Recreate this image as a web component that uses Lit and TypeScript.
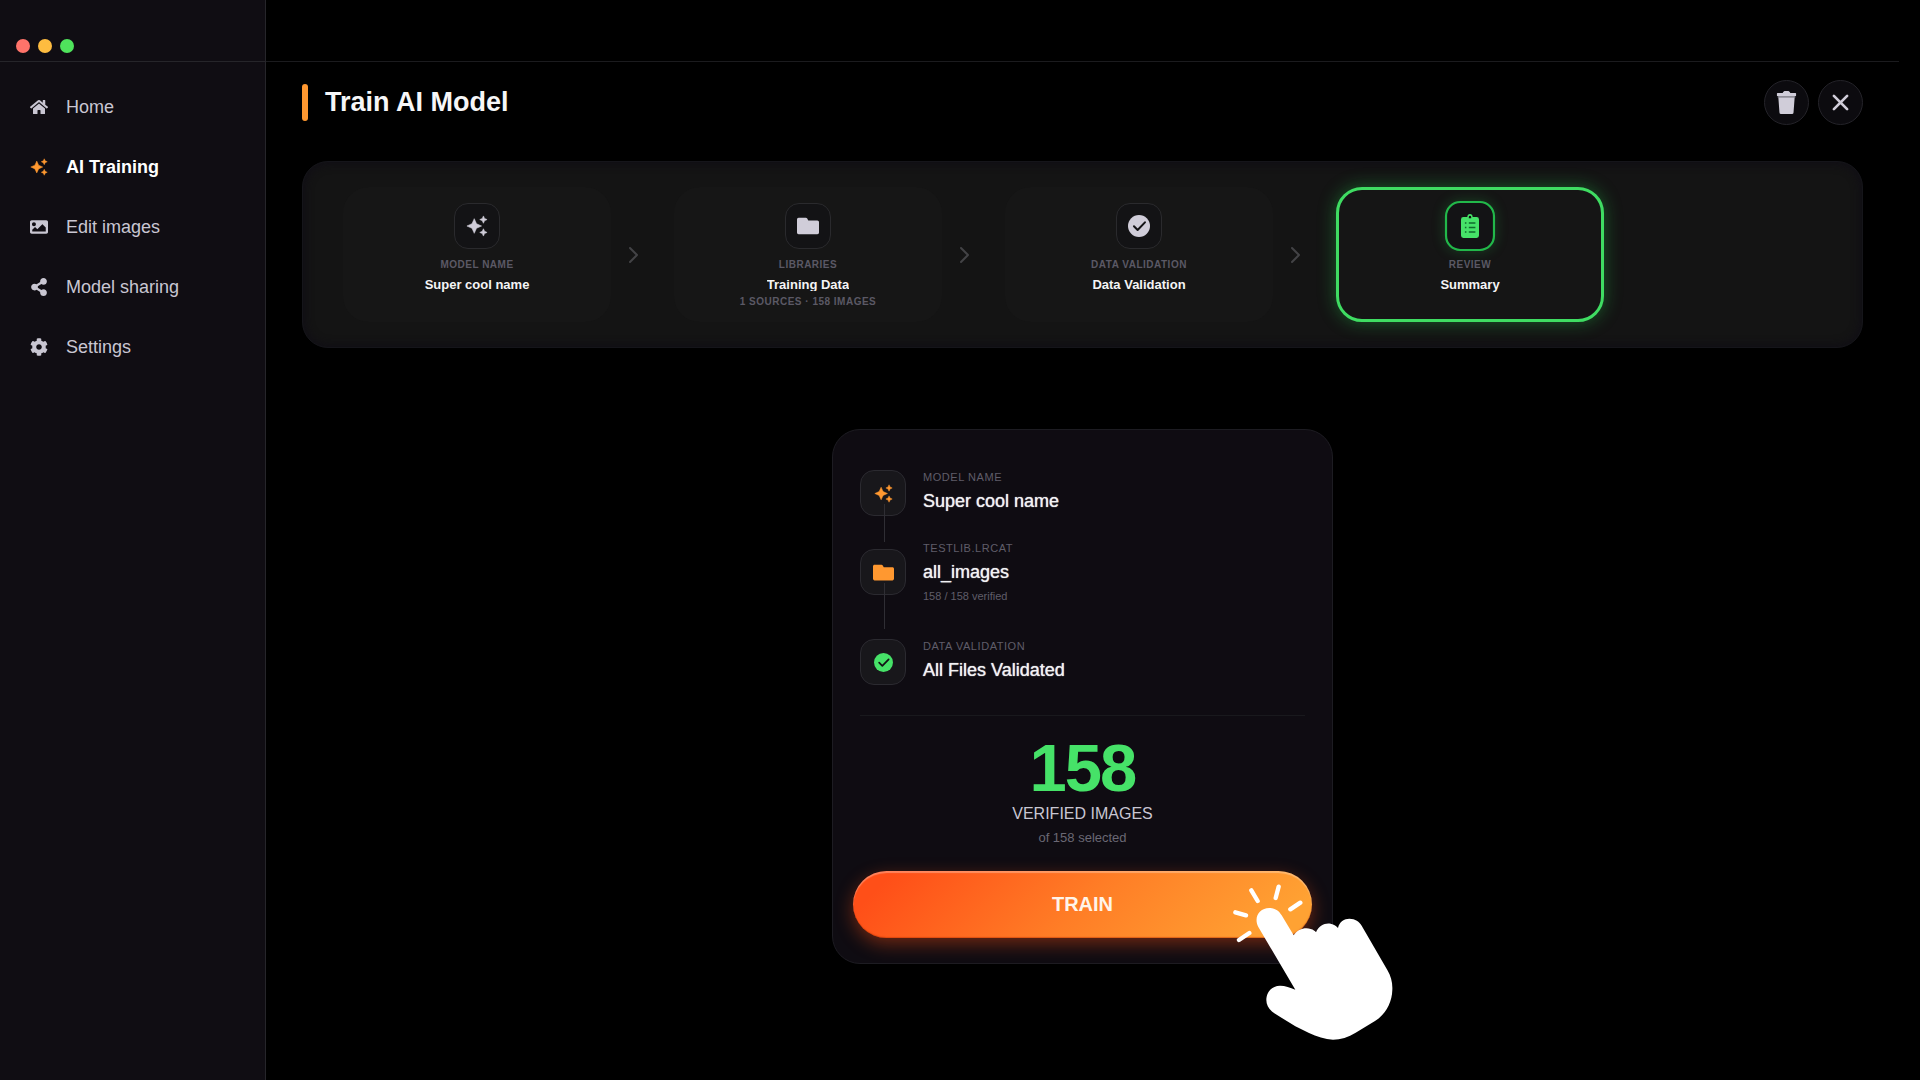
import { LitElement, html, css, svg } from "lit";
import { customElement, property } from "lit/decorators.js";
import { classMap } from "lit/directives/class-map.js";

interface Glyph {
  box: string;
  art: unknown;
}

const ICONS: Record<string, Glyph> = {
  home: {
    box: "0 0 576 512",
    art: svg`<path d="M280.37 148.26L96 300.11V464a16 16 0 0 0 16 16l112.06-.29a16 16 0 0 0 15.92-16V368a16 16 0 0 1 16-16h64a16 16 0 0 1 16 16v95.64a16 16 0 0 0 16 16.05L464 480a16 16 0 0 0 16-16V300L295.67 148.26a12.19 12.19 0 0 0-15.3 0zM571.6 251.47L488 182.56V44.05a12 12 0 0 0-12-12h-56a12 12 0 0 0-12 12v72.61L318.47 43a48 48 0 0 0-61 0L4.34 251.47a12 12 0 0 0-1.6 16.9l25.5 31A12 12 0 0 0 45.15 301l235.22-193.74a12.19 12.19 0 0 1 15.3 0L530.9 301a12 12 0 0 0 16.9-1.6l25.5-31a12 12 0 0 0-1.7-16.93z"/>`,
  },
  sparkles: {
    box: "0 0 24 24",
    art: svg`<path stroke="currentColor" stroke-width=".6" stroke-linejoin="round" d="m19 9 1.25-2.75L23 5l-2.75-1.25L19 1l-1.25 2.75L15 5l2.75 1.25L19 9zm-7.5.5L9 4 6.5 9.5 1 12l5.5 2.5L9 20l2.5-5.5L17 12l-5.5-2.5zM19 15l-1.25 2.75L15 19l2.75 1.25L19 23l1.25-2.75L23 19l-2.75-1.25L19 15z"/>`,
  },
  image: {
    box: "0 0 512 512",
    art: svg`<path d="M464 448H48c-26.51 0-48-21.49-48-48V112c0-26.51 21.49-48 48-48h416c26.51 0 48 21.49 48 48v288c0 26.51-21.49 48-48 48zM112 120c-30.928 0-56 25.072-56 56s25.072 56 56 56 56-25.072 56-56-25.072-56-56-56zM64 384h384V272l-87.515-87.515c-4.686-4.686-12.284-4.686-16.971 0L208 320l-55.515-55.515c-4.686-4.686-12.284-4.686-16.971 0L64 336v48z" fill-rule="evenodd"/>`,
  },
  share: {
    box: "0 0 448 512",
    art: svg`<path d="M352 320c-22.608 0-43.387 7.819-59.79 20.895l-102.486-64.054a96.551 96.551 0 0 0 0-41.683l102.486-64.054C308.613 184.181 329.392 192 352 192c53.019 0 96-42.981 96-96S405.019 0 352 0s-96 42.981-96 96c0 7.158.79 14.13 2.276 20.841L155.79 180.895C139.387 167.819 118.608 160 96 160c-53.019 0-96 42.981-96 96s42.981 96 96 96c22.608 0 43.387-7.819 59.79-20.895l102.486 64.054A96.301 96.301 0 0 0 256 416c0 53.019 42.981 96 96 96s96-42.981 96-96-42.981-96-96-96z"/>`,
  },
  settings: {
    box: "0 0 512 512",
    art: svg`<path d="M487.4 315.7l-42.6-24.6c4.3-23.2 4.3-47 0-70.2l42.6-24.6c4.9-2.8 7.1-8.6 5.5-14-11.1-35.6-30-67.8-54.7-94.6-3.8-4.1-10-5.1-14.8-2.3L380.8 110c-17.9-15.4-38.5-27.3-60.8-35.1V25.8c0-5.6-3.9-10.5-9.4-11.7-36.7-8.2-74.3-7.8-109.2 0-5.5 1.2-9.4 6.1-9.4 11.7V75c-22.2 7.9-42.8 19.8-60.8 35.1L88.7 85.5c-4.9-2.8-11-1.9-14.8 2.3-24.7 26.7-43.6 58.9-54.7 94.6-1.7 5.4.6 11.2 5.5 14L67.3 221c-4.3 23.2-4.3 47 0 70.2l-42.6 24.6c-4.9 2.8-7.1 8.6-5.5 14 11.1 35.6 30 67.8 54.7 94.6 3.8 4.1 10 5.1 14.8 2.3l42.6-24.6c17.9 15.4 38.5 27.3 60.8 35.1v49.2c0 5.6 3.9 10.5 9.4 11.7 36.7 8.2 74.3 7.8 109.2 0 5.5-1.2 9.4-6.1 9.4-11.7v-49.2c22.2-7.9 42.8-19.8 60.8-35.1l42.6 24.6c4.9 2.8 11 1.9 14.8-2.3 24.7-26.7 43.6-58.9 54.7-94.6 1.5-5.5-.7-11.3-5.6-14.1zM256 336c-44.1 0-80-35.9-80-80s35.9-80 80-80 80 35.9 80 80-35.9 80-80 80z"/>`,
  },
  folder: {
    box: "0 0 512 512",
    art: svg`<path d="M474 128H262l-24-44c-7-13-18-20-32-20H38C17 64 0 81 0 102v308c0 21 17 38 38 38h436c21 0 38-17 38-38V166c0-21-17-38-38-38z"/>`,
  },
  check: {
    box: "0 0 24 24",
    art: svg`<circle cx="12" cy="12" r="12"/><path d="M6.5 12.3 10.5 16.3 18.5 8" fill="none" stroke="#131316" stroke-width="2.2" stroke-linecap="round" stroke-linejoin="round"/>`,
  },
  clipboard: {
    box: "0 0 80 80",
    art: svg`<path fill-rule="evenodd" d="M18 10h13c0-6 4-10 9-10s9 4 9 10h13a8 8 0 0 1 8 8v54a8 8 0 0 1-8 8H18a8 8 0 0 1-8-8V18a8 8 0 0 1 8-8zM40 6a4 4 0 0 0-4 4v4h8v-4a4 4 0 0 0-4-4z"/><path d="M23 30h5M36 30h22M23 45h5M36 45h22M23 60h5M36 60h22" stroke="#0f6a2c" stroke-width="5" fill="none"/>`,
  },
  trash: {
    box: "0 0 72 72",
    art: svg`<path d="M10 14h52l-4 53a5 5 0 0 1-5 5H19a5 5 0 0 1-5-5z"/><path d="M8 14h56v7H8z" opacity=".75" fill="#77757f"/><path d="M8 6h16c2-4 5-6 8-6h8c3 0 6 2 8 6h16a2 2 0 0 1 2 2v6a2 2 0 0 1-2 2H8a2 2 0 0 1-2-2V8a2 2 0 0 1 2-2z"/>`,
  },
  close: {
    box: "0 0 18 18",
    art: svg`<path d="M2 2 16 16M16 2 2 16" fill="none" stroke="currentColor" stroke-width="2.8" stroke-linecap="round"/>`,
  },
  chevron: {
    box: "0 0 18 18",
    art: svg`<path d="M6 2 13 9 6 16" fill="none" stroke="currentColor" stroke-width="2" stroke-linecap="round" stroke-linejoin="round"/>`,
  },
};

@customElement("ui-icon")
class UiIcon extends LitElement {
  @property() name = "home";

  static styles = css`
    :host {
      display: block;
      flex: none;
    }
    .glyph {
      display: block;
      width: 100%;
      height: 100%;
      fill: currentColor;
    }
  `;

  render() {
    const glyph = ICONS[this.name];
    return html`<svg class="glyph" viewBox=${glyph.box} aria-hidden="true">${glyph.art}</svg>`;
  }
}

const NAV = [
  { icon: "home", text: "Home" },
  { icon: "sparkles", text: "AI Training", active: true },
  { icon: "image", text: "Edit images" },
  { icon: "share", text: "Model sharing" },
  { icon: "settings", text: "Settings" },
];

const STEPS = [
  { icon: "sparkles", label: "MODEL NAME", name: "Super cool name" },
  { icon: "folder", label: "LIBRARIES", name: "Training Data", detail: "1 SOURCES · 158 IMAGES" },
  { icon: "check", label: "DATA VALIDATION", name: "Data Validation" },
  { icon: "clipboard", label: "REVIEW", name: "Summary", active: true },
];

const FACTS = [
  { icon: "sparkles", label: "MODEL NAME", name: "Super cool name" },
  { icon: "folder", label: "TESTLIB.LRCAT", name: "all_images", detail: "158 / 158 verified" },
  { icon: "check", label: "DATA VALIDATION", name: "All Files Validated", done: true },
];

@customElement("app-sidebar")
class AppSidebar extends LitElement {
  static styles = css`
    :host {
      display: block;
      background: #100d13;
      border-right: 1px solid #26252a;
    }
    .controls {
      display: flex;
      align-items: flex-end;
      gap: 8px;
      height: 62px;
      padding: 0 16px 8px;
      box-sizing: border-box;
      border-bottom: 1px solid #26252a;
    }
    .dot {
      width: 14px;
      height: 14px;
      padding: 0;
      border: 0;
      border-radius: 50%;
    }
    .red {
      background: #ff736a;
    }
    .yellow {
      background: #febc40;
    }
    .green {
      background: #4fe35c;
    }
    .nav {
      list-style: none;
      margin: 0;
      padding: 15px 0 0;
    }
    .link {
      display: flex;
      align-items: center;
      gap: 18px;
      height: 60px;
      padding-left: 30px;
      color: #c9c6d2;
      font-size: 18px;
      text-decoration: none;
    }
    .link ui-icon {
      width: 18px;
      height: 18px;
    }
    .active {
      color: #fff;
      font-weight: 700;
    }
    .active ui-icon {
      color: #ff9830;
    }
  `;

  render() {
    return html`
      <div class="controls">
        <button class="dot red" aria-label="Close window"></button>
        <button class="dot yellow" aria-label="Minimize window"></button>
        <button class="dot green" aria-label="Zoom window"></button>
      </div>
      <nav>
        <ul class="nav">
          ${NAV.map(
            (item) => html`<li>
              <a class=${classMap({ link: true, active: !!item.active })} href="#">
                <ui-icon name=${item.icon}></ui-icon><span>${item.text}</span>
              </a>
            </li>`
          )}
        </ul>
      </nav>
    `;
  }
}

@customElement("step-track")
class StepTrack extends LitElement {
  static styles = css`
    :host {
      display: block;
    }
    .track {
      display: flex;
      list-style: none;
      margin: 0;
      padding: 25px 40px;
      border: 1px solid #15151a;
      border-radius: 26px;
      background: #141414;
      box-shadow: inset 0 0 8px 2px #100e15;
    }
    .step {
      display: flex;
      flex-direction: column;
      align-items: center;
      flex: 0 1 268px;
      min-height: 135px;
      padding-top: 16px;
      box-sizing: border-box;
      border-radius: 26px;
      background: #161616;
      text-align: center;
    }
    .tile {
      display: grid;
      place-items: center;
      width: 46px;
      height: 46px;
      box-sizing: border-box;
      border: 1px solid #2a2a2d;
      border-radius: 14px;
      background: #131315;
      color: #d0cdd9;
    }
    .tile ui-icon {
      width: 22px;
      height: 22px;
    }
    .label,
    .detail {
      color: #5b5965;
      font-size: 10px;
      font-weight: 700;
      line-height: 12px;
      letter-spacing: 0.05em;
    }
    .label {
      margin-top: 10px;
    }
    .name {
      margin-top: 6px;
      color: #f4f4f5;
      font-size: 13px;
      font-weight: 700;
      line-height: 16px;
    }
    .clipped {
      height: 14px;
      overflow: hidden;
    }
    .detail {
      margin-top: 5px;
    }
    .active {
      padding-top: 13px;
      border: 3px solid #3fdc62;
      background: #151515;
      box-shadow: 0 0 18px rgba(36, 200, 76, 0.4);
    }
    .active .tile {
      border: 2px solid #22b84a;
      color: #46e268;
      box-shadow: 0 0 12px rgba(36, 200, 76, 0.25);
      transform: scale(1.09);
    }
    .arrow {
      display: flex;
      align-items: center;
      flex: 0 1 63px;
      padding-left: 13px;
      box-sizing: border-box;
      color: #434346;
    }
    .arrow ui-icon {
      width: 18px;
      height: 18px;
    }
  `;

  render() {
    return html`<ol class="track">
      ${STEPS.map(
        (step, i) => html`
          ${i ? html`<li class="arrow" role="presentation"><ui-icon name="chevron"></ui-icon></li>` : ""}
          <li class=${classMap({ step: true, active: !!step.active })}>
            <span class="tile"><ui-icon name=${step.icon}></ui-icon></span>
            <span class="label">${step.label}</span>
            <span class=${classMap({ name: true, clipped: !!step.detail })}>${step.name}</span>
            ${step.detail ? html`<span class="detail">${step.detail}</span>` : ""}
          </li>
        `
      )}
    </ol>`;
  }
}

@customElement("summary-card")
class SummaryCard extends LitElement {
  static styles = css`
    :host {
      display: block;
      position: relative;
      width: 501px;
      max-width: 100%;
      padding: 40px 20px 25px;
      box-sizing: border-box;
      border: 1px solid #1d1c22;
      border-radius: 28px;
      background: #0f0c12;
    }
    .facts {
      list-style: none;
      margin: 0 7px;
      padding: 0 0 30px;
      border-bottom: 1px solid #19191d;
    }
    .fact {
      display: flex;
      align-items: center;
      gap: 17px;
      min-height: 46px;
      margin-bottom: 25px;
    }
    .detailed {
      margin-bottom: 36px;
    }
    .fact:last-child {
      margin-bottom: 0;
    }
    .tile {
      display: grid;
      place-items: center;
      position: relative;
      width: 46px;
      height: 46px;
      box-sizing: border-box;
      border: 1px solid #2b2a30;
      border-radius: 14px;
      background: #18171b;
      color: #ff9830;
    }
    .tile ui-icon {
      width: 19px;
      height: 19px;
    }
    .detailed ui-icon {
      width: 21px;
      height: 21px;
    }
    .tile::after {
      content: "";
      position: absolute;
      top: 33px;
      left: 23px;
      width: 1px;
      height: 38px;
      background: #2f2e34;
    }
    .detailed .tile::after {
      height: 46px;
    }
    .fact:last-child .tile::after {
      content: none;
    }
    .done {
      color: #46e268;
    }
    .text {
      display: flex;
      flex-direction: column;
      padding-bottom: 4px;
    }
    .detailed .text {
      padding-bottom: 0;
    }
    .label,
    .detail {
      color: #5f5d69;
      font-size: 11px;
      line-height: 14px;
    }
    .label {
      letter-spacing: 0.05em;
    }
    .name {
      margin-top: 6px;
      color: #f2f2f4;
      font-size: 18px;
      line-height: 22px;
      text-shadow: 0 0 1px #f2f2f4;
    }
    .detail {
      margin-top: 6px;
    }
    .total {
      display: flex;
      flex-direction: column;
      align-items: center;
      padding: 20px 0 25px;
    }
    .count {
      color: #46e268;
      font-size: 67px;
      font-weight: 700;
      line-height: 64px;
      letter-spacing: -0.03em;
    }
    .caption {
      margin-top: 5px;
      color: #c9c6d2;
      font-size: 16px;
      line-height: 18px;
    }
    .selected {
      margin-top: 7px;
      color: #6a6874;
      font-size: 13px;
      line-height: 16px;
    }
    .train {
      display: block;
      width: 100%;
      height: 67px;
      border: 0;
      border-radius: 34px;
      background: linear-gradient(135deg, #ff4f18 8%, #ff7d26 50%, #ffa233 92%);
      box-shadow: inset 0 2px 1px rgba(255, 255, 255, 0.3), inset 0 -1px 1px rgba(190, 50, 0, 0.5),
        0 6px 18px rgba(255, 80, 20, 0.4);
      color: #fff4ea;
      font: inherit;
      font-size: 20px;
      font-weight: 700;
    }
    .hand {
      position: absolute;
      right: -78px;
      bottom: -88px;
      width: 200px;
      height: 180px;
      fill: #fff;
      pointer-events: none;
    }
  `;

  render() {
    return html`
      <ul class="facts">
        ${FACTS.map(
          (fact) => html`<li class=${classMap({ fact: true, detailed: !!fact.detail })}>
            <span class=${classMap({ tile: true, done: !!fact.done })}><ui-icon name=${fact.icon}></ui-icon></span>
            <span class="text">
              <span class="label">${fact.label}</span>
              <span class="name">${fact.name}</span>
              ${fact.detail ? html`<span class="detail">${fact.detail}</span>` : ""}
            </span>
          </li>`
        )}
      </ul>
      <div class="total">
        <span class="count">158</span>
        <span class="caption">VERIFIED IMAGES</span>
        <span class="selected">of 158 selected</span>
      </div>
      <button class="train">TRAIN</button>
      <svg class="hand" viewBox="0 0 600 540" aria-hidden="true">
        <path
          d="M145 168C130 138 148 111 178 111c18 0 30 10 37 22l36 60c11-18 34-25 51-19 8 2 13 6 16 10 8-21 27-29 44-26 10 2 18 7 22 13 4-19 19-28 34-28 18 0 30 9 37 21l77 133c11 19 16 38 15 59-1 39-20 74-52 94l-58 35c-22 14-45 21-68 21-24-1-49-9-72-20l-41-20-63-39c-15-10-24-24-24-40 0-25 18-43 41-43 16 0 30 5 46 12z"
        />
        <path
          d="M124 58 143 90M206 47 197 81M271 95 241 115M76 124 108 133M118 186 87 207"
          stroke="#fff"
          stroke-width="13"
          stroke-linecap="round"
        />
      </svg>
    `;
  }
}

@customElement("app-root")
class AppRoot extends LitElement {
  static styles = css`
    :host {
      display: grid;
      grid-template-columns: 266px minmax(0, 1fr);
      min-height: 100vh;
      background: #000;
      font-family: "Liberation Sans", Arial, sans-serif;
    }
    .main {
      margin-right: 21px;
    }
    .strip {
      height: 61px;
      border-bottom: 1px solid #1b1b1e;
    }
    .body {
      display: flex;
      flex-direction: column;
      padding: 18px 36px;
    }
    .header {
      display: flex;
      align-items: center;
      gap: 9px;
      margin-bottom: 36px;
    }
    .title {
      display: flex;
      align-items: center;
      gap: 17px;
      flex: 1;
      margin: 0;
      color: #f6f6f7;
      font-size: 27px;
      line-height: 37px;
    }
    .title::before {
      content: "";
      width: 6px;
      height: 37px;
      border-radius: 3px;
      background: #ff9830;
    }
    .round {
      display: grid;
      place-items: center;
      width: 45px;
      height: 45px;
      padding: 0;
      border: 1px solid #242329;
      border-radius: 50%;
      background: #0c0b0f;
      color: #d0cdd9;
    }
    .round ui-icon {
      width: 23px;
      height: 23px;
    }
    .round .small {
      width: 17px;
      height: 17px;
    }
    .summary {
      align-self: center;
      margin-top: 81px;
    }
  `;

  render() {
    return html`
      <app-sidebar></app-sidebar>
      <main class="main">
        <div class="strip"></div>
        <div class="body">
          <header class="header">
            <h1 class="title">Train AI Model</h1>
            <button class="round" aria-label="Delete"><ui-icon name="trash"></ui-icon></button>
            <button class="round" aria-label="Close"><ui-icon class="small" name="close"></ui-icon></button>
          </header>
          <step-track></step-track>
          <summary-card class="summary"></summary-card>
        </div>
      </main>
    `;
  }
}
